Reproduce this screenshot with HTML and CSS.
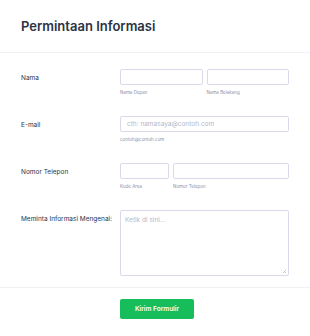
FILE: index.html
```html
<!DOCTYPE html>
<html lang="id">
<head>
    <meta charset="UTF-8">
    <meta name="viewport" content="width=device-width, initial-scale=1.0">
    <title>Permintaan Informasi</title>
    <link rel="stylesheet" href="styles.css">
</head>
<body>
    <div class="form">
        <div class="form-header">
            <h1>Permintaan Informasi</h1>
        </div>

        <div class="form-body">
            <div class="row">
                <label class="label">Nama</label>
                <div class="fields">
                    <div class="field">
                        <input class="input" type="text">
                        <span class="sublabel">Nama Depan</span>
                    </div>
                    <div class="field">
                        <input class="input" type="text">
                        <span class="sublabel">Nama Belakang</span>
                    </div>
                </div>
            </div>

            <div class="row">
                <label class="label">E-mail</label>
                <div class="fields">
                    <div class="field">
                        <input class="input" type="email" placeholder="cth: namasaya@contoh.com">
                        <span class="sublabel">contoh@contoh.com</span>
                    </div>
                </div>
            </div>

            <div class="row">
                <label class="label">Nomor Telepon</label>
                <div class="fields">
                    <div class="field area">
                        <input class="input" type="tel">
                        <span class="sublabel">Kode Area</span>
                    </div>
                    <div class="field">
                        <input class="input" type="tel">
                        <span class="sublabel">Nomor Telepon</span>
                    </div>
                </div>
            </div>

            <div class="row">
                <label class="label">Meminta Informasi Mengenai:</label>
                <div class="fields textarea-wrap">
                    <textarea class="textarea" placeholder="Ketik di sini..."></textarea>
                </div>
            </div>
        </div>

        <div class="form-footer">
            <button class="btn" type="submit">Kirim Formulir</button>
        </div>
    </div>
</body>
</html>
```

FILE: styles.css
```css
* {
    margin: 0;
    padding: 0;
    box-sizing: border-box;
}

body {
    font-family: 'Inter', 'Noto Sans', sans-serif;
    background: #fff;
    color: #2c3345;
}

.form-header {
    padding: 17px 21px 17px;
    border-bottom: 1px solid #f1f2f6;
}

h1 {
    font-size: 13px;
    line-height: 18px;
    font-weight: 600;
    color: #2c3345;
}

.form-body {
    display: flex;
    flex-direction: column;
    gap: 20px;
    padding: 16px 21px 11px;
    border-bottom: 1px solid #f1f2f6;
}

.row {
    display: grid;
    grid-template-columns: 99px 1fr;
}

.label {
    font-size: 6.5px;
    line-height: 8px;
    font-weight: 400;
    padding-top: 5px;
    color: #2c3345;
}

.fields {
    display: flex;
    gap: 4px;
}

.field {
    flex: 1;
    display: flex;
    flex-direction: column;
}

.field.area {
    flex: 0 0 49px;
}

.input {
    height: 16px;
    width: 100%;
    border: 1px solid #d8dae9;
    border-radius: 2px;
    padding: 0 6px;
    font-family: inherit;
    font-size: 6.5px;
    color: #2c3345;
    background: #fff;
}

.input::placeholder,
.textarea::placeholder {
    color: #b4b7c9;
}

.sublabel {
    margin-top: 5px;
    font-size: 4.5px;
    line-height: 6px;
    color: #8d8fa8;
}

.textarea-wrap {
    position: relative;
}

/* faint resize grip */
.textarea-wrap::after {
    content: '';
    position: absolute;
    right: 3px;
    bottom: 3px;
    width: 3px;
    height: 3px;
    background: linear-gradient(135deg, transparent 45%, #c3c5d4 45%, #c3c5d4 60%, transparent 60%, transparent 75%, #c3c5d4 75%);
}

.textarea {
    display: block;
    width: 100%;
    height: 66px;
    border: 1px solid #d8dae9;
    border-radius: 2px;
    padding: 5px 4px;
    font-family: inherit;
    font-size: 6.5px;
    color: #2c3345;
    resize: none;
}

.form-footer {
    padding: 11px 21px 0 120px;
}

.btn {
    display: block;
    width: 74px;
    height: 20px;
    border: none;
    border-radius: 2px;
    background: #18bd5b;
    color: #fff;
    font-family: inherit;
    font-size: 6.5px;
    font-weight: 600;
    cursor: pointer;
}
```
